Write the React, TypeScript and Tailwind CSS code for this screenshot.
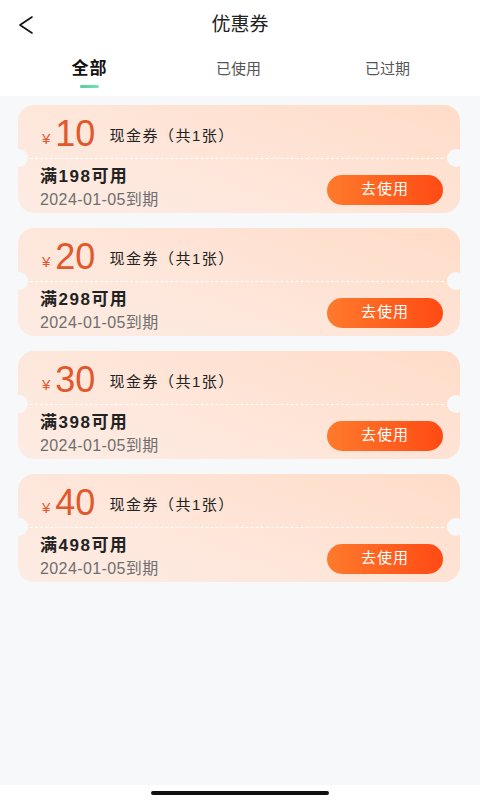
import React from "react";

const coupons = [
  { amount: "10", min: "198" },
  { amount: "20", min: "298" },
  { amount: "30", min: "398" },
  { amount: "40", min: "498" },
];

function Coupon({ amount, min }: { amount: string; min: string }) {
  return (
    <div className="relative h-[108px] rounded-[16px] overflow-hidden bg-[linear-gradient(200deg,#ffdcc8_0%,#fee5d8_50%,#fdece4_100%)]">
      <div className="absolute left-[-8px] top-[44px] w-[18px] h-[18px] rounded-full bg-[#f7f8fa]" />
      <div className="absolute right-[-5px] top-[44px] w-[18px] h-[18px] rounded-full bg-[#f7f8fa]" />
      <div className="absolute left-[12px] right-[16px] top-[53px] border-t border-dashed border-white/90" />
      <div className="h-[53px] flex items-center pl-[24px] pt-[4px]">
        <span className="text-[15px] text-[#e2592c] leading-none mt-[10px]">¥</span>
        <span className="text-[36px] text-[#e0582b] leading-none ml-[5px]">{amount}</span>
        <span className="text-[15px] tracking-[1.5px] text-[#222] ml-[14px] mt-[6px]">现金券（共1张）</span>
      </div>
      <div className="h-[55px] flex items-center justify-between pl-[22px] pr-[17px]">
        <div className="flex flex-col mt-[6px]">
          <span className="text-[17px] tracking-[1.5px] font-bold text-[#222] leading-[22px]">满{min}可用</span>
          <span className="text-[16px] tracking-[0.4px] text-[#6f6f6f] leading-[22px] mt-[1px]">2024-01-05到期</span>
        </div>
        <div className="w-[116px] h-[30px] rounded-full bg-[linear-gradient(90deg,#ff7a2c,#ff4a14)] flex items-center justify-center text-white text-[15px] tracking-[1px] mt-[8px]">
          去使用
        </div>
      </div>
    </div>
  );
}

export default function App() {
  return (
    <div className="w-[480px] h-[800px] bg-[#f7f8fa] flex flex-col font-['Liberation_Sans','Noto_Sans_CJK_SC',sans-serif]">
      <div className="bg-white h-[96px] flex flex-col">
        <div className="relative h-[48px] flex items-center justify-center pt-[3px]">
          <svg className="absolute left-[16px] top-[14px]" width="20" height="22" viewBox="0 0 20 22" fill="none">
            <path d="M16 3 L4 11 L16 19" stroke="#111" strokeWidth="1.6" strokeLinecap="round" strokeLinejoin="round" />
          </svg>
          <span className="text-[19px] text-[#222]">优惠券</span>
        </div>
        <div className="h-[48px] pl-[15px] pr-[18px] grid grid-cols-3">
          <div className="flex flex-col items-center pt-[9px]">
            <span className="text-[17px] tracking-[1px] font-bold text-[#111] leading-[24px]">全部</span>
            <div className="w-[19px] h-[3px] rounded-full bg-[linear-gradient(90deg,#4fcf9a,#7fe0b4)] mt-[4px]" />
          </div>
          <div className="flex justify-center pt-[10px]">
            <span className="text-[15px] text-[#555] leading-[22px]">已使用</span>
          </div>
          <div className="flex justify-center pt-[10px]">
            <span className="text-[15px] text-[#555] leading-[22px]">已过期</span>
          </div>
        </div>
      </div>
      <div className="flex-1 pl-[18px] pr-[20px] pt-[9px] flex flex-col gap-[15px]">
        {coupons.map((c) => (
          <Coupon key={c.amount} amount={c.amount} min={c.min} />
        ))}
      </div>
      <div className="bg-white h-[15px] flex justify-center pt-[6px]">
        <div className="w-[178px] h-[4px] rounded-full bg-[#111]" />
      </div>
    </div>
  );
}
